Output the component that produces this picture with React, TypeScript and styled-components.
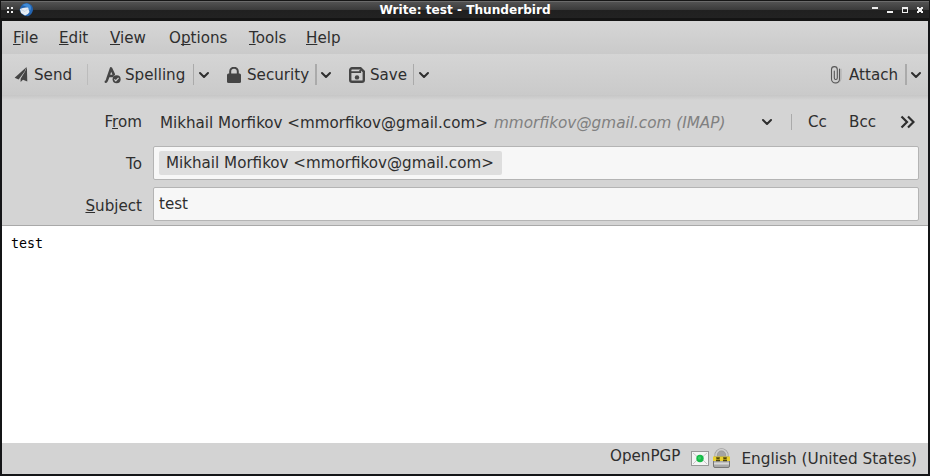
import React from "react";
import styled, { createGlobalStyle } from "styled-components";

const Global = createGlobalStyle`
  * { box-sizing: border-box; }
  html, body { margin: 0; background: #141517; overflow: hidden; }
  body { font: 15.13px/20px "DejaVu Sans", sans-serif; color: #2e2e2e; }
`;

const Window = styled.div`
  width: 930px;
  height: 476px;
  display: flex;
  flex-direction: column;
  background: #141517;
  padding: 0 2px 2px;
  white-space: nowrap;
`;

const TitleBar = styled.header`
  height: 21px;
  flex: none;
  margin: 0 -2px;
  display: grid;
  grid-template-columns: 100px 1fr 100px;
  background: linear-gradient(#161616 0 1px, #6b6b6b 1px 2px, #525252 2px, #3a3a3a 10px, #202020 10px, #222 18px, #141414 18px);
  border-left: 1px solid #161616;
  border-right: 1px solid #161616;
`;

const TitleIcons = styled.div`
  display: flex;
  gap: 6px;
  padding: 2px 0 0 6px;
`;

const Title = styled.h1`
  margin: 0;
  padding-top: 2px;
  text-align: center;
  font-size: 12.12px;
  line-height: 17px;
  font-weight: bold;
  color: #fff;
`;

const WindowControls = styled.div`
  display: flex;
  justify-content: flex-end;
  padding: 6px 5px 0 0;
`;

const MenuBar = styled.nav`
  height: 33px;
  flex: none;
  display: flex;
  padding: 7px 0 0 11px;
  background: linear-gradient(#d6d6d6, #cacaca);
`;

const MenuItem = styled.span<{ $width: number }>`
  width: ${(p) => p.$width}px;
`;

const Key = styled.span`
  text-decoration: underline;
  text-decoration-thickness: 1px;
  text-underline-offset: 1px;
  text-decoration-skip-ink: none;
`;

const ToolBar = styled.div`
  height: 41px;
  flex: none;
  display: flex;
  align-items: flex-start;
  padding: 10px 0 0 12px;
  background: linear-gradient(#d5d5d5, #cacaca);
`;

const Tool = styled.div<{ $width: number; $gap: number; $indent?: number }>`
  display: flex;
  align-items: center;
  height: 21px;
  width: ${(p) => p.$width}px;
  gap: ${(p) => p.$gap}px;
  padding-left: ${(p) => p.$indent ?? 0}px;
`;

const Divider = styled.div<{ $color?: string; $width?: number; $height?: number }>`
  flex: none;
  width: ${(p) => p.$width ?? 1}px;
  height: ${(p) => p.$height ?? 21}px;
  background: ${(p) => p.$color ?? "#aaa"};
`;

const Drop = styled.div<{ $width: number; $indent?: number }>`
  display: flex;
  align-items: center;
  height: 21px;
  padding-left: ${(p) => p.$indent ?? 3}px;
  width: ${(p) => p.$width}px;
`;

const Spacer = styled.div`
  flex: 1;
`;

const Headers = styled.section`
  height: 131px;
  flex: none;
  display: grid;
  grid-template-columns: 140px 766px;
  grid-template-rows: 36px 34px 34px;
  column-gap: 11px;
  padding-top: 15px;
  row-gap: 0;
  border-bottom: 1px solid #a9a9a9;
  background: linear-gradient(#c6c6c6, #d4d4d4 5px);
`;

const Label = styled.label<{ $top: number }>`
  text-align: right;
  padding-top: ${(p) => p.$top}px;
`;

const FromRow = styled.div`
  display: flex;
  padding: 3px 0 0 7px;
`;

const Sender = styled.span`
  width: 334px;
`;

const Account = styled.em`
  width: 267px;
  font-size: 15.25px;
  color: #808080;
`;

const ExtraFields = styled.div`
  display: flex;
  margin-top: -1px;
`;

const FieldButton = styled.span<{ $width: number; $top?: number }>`
  width: ${(p) => p.$width}px;
  padding-top: ${(p) => p.$top ?? 0}px;
`;

const MoreButton = styled.span`
  padding-top: 3px;
  line-height: 0;
`;

const Field = styled.div<{ $offset?: number }>`
  height: 34px;
  margin-top: ${(p) => p.$offset ?? 0}px;
  padding: 4px 5px;
  background: #f7f7f7;
  border: 1px solid #b4b4b4;
  border-radius: 2px;
`;

const Pill = styled.div`
  width: 343px;
  height: 24px;
  padding: 2px 7px;
  border-radius: 2px;
  background: #dedede;
`;

const Subject = styled.div`
  padding-top: 2px;
`;

const Editor = styled.main`
  flex: 1;
  padding: 10px 9px;
  background: #fff;
  color: #000;
  font: 13.33px/16px "DejaVu Sans Mono", monospace;
`;

const StatusBar = styled.footer`
  height: 31px;
  flex: none;
  display: flex;
  justify-content: flex-end;
  padding: 3px 11px 0 0;
  background: #d3d3d3;
`;

const StatusIcons = styled.div`
  display: flex;
  gap: 4px;
  padding: 2px 11px 0 11px;
`;

const Language = styled.span`
  padding-top: 3px;
  font-size: 15.3px;
`;

const Chevron = () => (
  <svg width="12" height="12" viewBox="0 0 12 12" fill="none" stroke="#2e2e2e" strokeWidth="2" strokeLinecap="round" strokeLinejoin="round">
    <path d="M2 4l4 4 4-4" />
  </svg>
);

const GripIcon = () => (
  <svg width="6" height="16" viewBox="0 0 6 16" fill="#eee">
    <path d="M0 5h2v2H0zM4 5h2v2H4zM0 9h2v2H0zM4 9h2v2H4z" />
  </svg>
);

const BirdIcon = () => (
  <svg width="15" height="16" viewBox="0 0 15 16">
    <path d="M2 4Q5 .6 9 1.2Q14 2.5 14 8Q13 13 9 14.2Q4 14 2 11L.5 8Z" fill="#2263b0" />
    <path d="M3 3Q8 0 11 3Q13 6 11 9L8 5Z" fill="#3f8bd8" />
    <path d="M1 7Q4 5 9 5.5L10.5 10Q9 13 6 13.5L2 11Z" fill="#e6edf5" />
    <path d="M2 7.5l4 2 3-3" fill="none" stroke="#bccadd" strokeWidth=".8" />
  </svg>
);

const ControlsIcon = () => (
  <svg width="52" height="8" viewBox="0 0 52 8" fill="#eee" shapeRendering="crispEdges">
    <path d="M0 1h6v2H0zM15 5h6v2h-6z" />
    <path fillRule="evenodd" d="M30 1h6v6h-6zM31 3v3h4V3z" />
    <path d="M45 1h2v1h2V1h2v2h-1v2h1v2h-2V6h-2v1h-2V5h1V3h-1z" />
  </svg>
);

const SendIcon = () => (
  <svg width="15" height="17" viewBox="0 0 15 17" fill="#454545">
    <path d="M12.6 1L.6 11.8l4 1.8 6-8z" />
    <path d="M12.9 1L13.3 15.4 9 13.8 6.6 16v-3.2L11 5.5z" />
  </svg>
);

const SpellingIcon = () => (
  <svg width="17" height="18" viewBox="0 0 17 18" fill="none">
    <path d="M1.8 15.8Q2.6 15.8 3.4 13L7 2.4l2.8 6M4.4 10h4" stroke="#454545" strokeWidth="2.5" strokeLinecap="round" strokeLinejoin="round" />
    <circle cx="12.6" cy="13.2" r="4" fill="#454545" />
    <path d="M10.4 13.4l1.4 1.4 2.8-3" stroke="#d0d0d0" strokeWidth="1.2" />
  </svg>
);

const LockIcon = () => (
  <svg width="14" height="16" viewBox="0 0 14 16">
    <path d="M3.2 8V4.5a3.8 3.8 0 0 1 7.6 0V8" fill="none" stroke="#454545" strokeWidth="2" />
    <rect y="6.5" width="14" height="9.5" rx="1.5" fill="#454545" />
  </svg>
);

const SaveIcon = () => (
  <svg width="16" height="16" viewBox="0 0 16 16" fill="none" stroke="#454545" strokeWidth="2.4">
    <path d="M3 1.3h8.5L14.8 4.6V13a1.8 1.8 0 0 1-1.8 1.8H3A1.8 1.8 0 0 1 1.2 13V3A1.7 1.7 0 0 1 3 1.3z" />
    <path d="M2 5.2h9.2V3" strokeWidth="1.8" />
    <circle cx="8" cy="10.4" r="2.2" fill="#454545" stroke="none" />
  </svg>
);

const ClipIcon = () => (
  <svg width="12" height="19" viewBox="0 0 12 19" fill="none" strokeLinecap="round">
    <path d="M11 4v9.5a4.5 4.5 0 0 1-6 4" stroke="#b2b2b2" strokeWidth="1.2" />
    <path d="M4.3 6v7a1.5 1.5 0 0 0 3 0V4.5A2.8 2.8 0 0 0 1.5 4.5V14a4 4 0 0 0 8 0V4" stroke="#555" strokeWidth="1.1" />
  </svg>
);

const MoreIcon = () => (
  <svg width="15" height="14" viewBox="0 0 15 14" fill="none" stroke="#2e2e2e" strokeWidth="2.2">
    <path d="M1.5 1.5L7 7l-5.5 5.5M8 1.5L13.5 7 8 12.5" />
  </svg>
);

const SignedIcon = () => (
  <svg width="18" height="22" viewBox="0 0 18 22">
    <rect x=".5" y="3.5" width="17" height="14" fill="#f4f4f4" stroke="#989898" />
    <path d="M2 5l7 6 7-6M2 16l5-5m9 5l-5-5" fill="none" stroke="#c7c7c7" />
    <circle cx="9" cy="10.5" r="3.7" fill="#17bb48" />
    <circle cx="8.5" cy="10" r="1.7" fill="#35d365" />
  </svg>
);

const EncryptedIcon = () => (
  <svg width="17" height="22" viewBox="0 0 17 22">
    <path d="M3 11V7.2a5.5 5.5 0 0 1 11 0V11" fill="#a4a4a4" stroke="#999" strokeWidth="3" />
    <path d="M3 9V7.2a5.5 5.5 0 0 1 11 0V9" fill="none" stroke="#cecece" strokeWidth="1.7" />
    <rect x=".5" y="9" width="16" height="10.5" rx="1.5" fill="#a9a9a9" stroke="#777" />
    <path d="M1 14.5h15v2H1z" fill="#d8d8d8" />
    <path d="M0 8.5h17V13H0z" fill="#ead02c" />
    <path d="M4 9v1.5h2V9m5 0v1.5h2V9M3 12.5h4m3 0h4" fill="none" stroke="#4f470f" strokeWidth="1.3" />
  </svg>
);

export default function App() {
  return (
    <>
      <Global />
      <Window>
        <TitleBar>
          <TitleIcons><GripIcon /><BirdIcon /></TitleIcons>
          <Title>Write: test - Thunderbird</Title>
          <WindowControls><ControlsIcon /></WindowControls>
        </TitleBar>
        <MenuBar>
          <MenuItem $width={46}><Key>F</Key>ile</MenuItem>
          <MenuItem $width={51}><Key>E</Key>dit</MenuItem>
          <MenuItem $width={59}><Key>V</Key>iew</MenuItem>
          <MenuItem $width={80}>O<Key>p</Key>tions</MenuItem>
          <MenuItem $width={57}><Key>T</Key>ools</MenuItem>
          <MenuItem $width={50}><Key>H</Key>elp</MenuItem>
        </MenuBar>
        <ToolBar>
          <Tool $width={73} $gap={5}><SendIcon />Send</Tool>
          <Divider $color="#bcbcbc" />
          <Tool $width={105} $gap={4} $indent={16}><SpellingIcon />Spelling</Tool>
          <Divider />
          <Drop $width={33} $indent={4}><Chevron /></Drop>
          <Tool $width={88} $gap={6}><LockIcon />Security</Tool>
          <Divider $width={2} />
          <Drop $width={32}><Chevron /></Drop>
          <Tool $width={64} $gap={5}><SaveIcon />Save</Tool>
          <Divider />
          <Drop $width={20} $indent={4}><Chevron /></Drop>
          <Spacer />
          <Tool $width={75} $gap={7}><ClipIcon />Attach</Tool>
          <Divider $width={2} />
          <Drop $width={21}><Chevron /></Drop>
        </ToolBar>
        <Headers>
          <Label $top={2}>F<Key>r</Key>om</Label>
          <FromRow>
            <Sender>Mikhail Morfikov &lt;mmorfikov@gmail.com&gt;</Sender>
            <Account>mmorfikov@gmail.com (IMAP)</Account>
            <ExtraFields>
              <FieldButton $width={30} $top={1}><Chevron /></FieldButton>
              <FieldButton $width={17} $top={2}><Divider $height={16} /></FieldButton>
              <FieldButton $width={41}>Cc</FieldButton>
              <FieldButton $width={51}>Bcc</FieldButton>
              <MoreButton><MoreIcon /></MoreButton>
            </ExtraFields>
          </FromRow>
          <Label $top={8}>To</Label>
          <Field><Pill>Mikhail Morfikov &lt;mmorfikov@gmail.com&gt;</Pill></Field>
          <Label $top={16}><Key>S</Key>ubject</Label>
          <Field $offset={7}><Subject>test</Subject></Field>
        </Headers>
        <Editor>test</Editor>
        <StatusBar>
          <span>OpenPGP</span>
          <StatusIcons><SignedIcon /><EncryptedIcon /></StatusIcons>
          <Language>English (United States)</Language>
        </StatusBar>
      </Window>
    </>
  );
}
